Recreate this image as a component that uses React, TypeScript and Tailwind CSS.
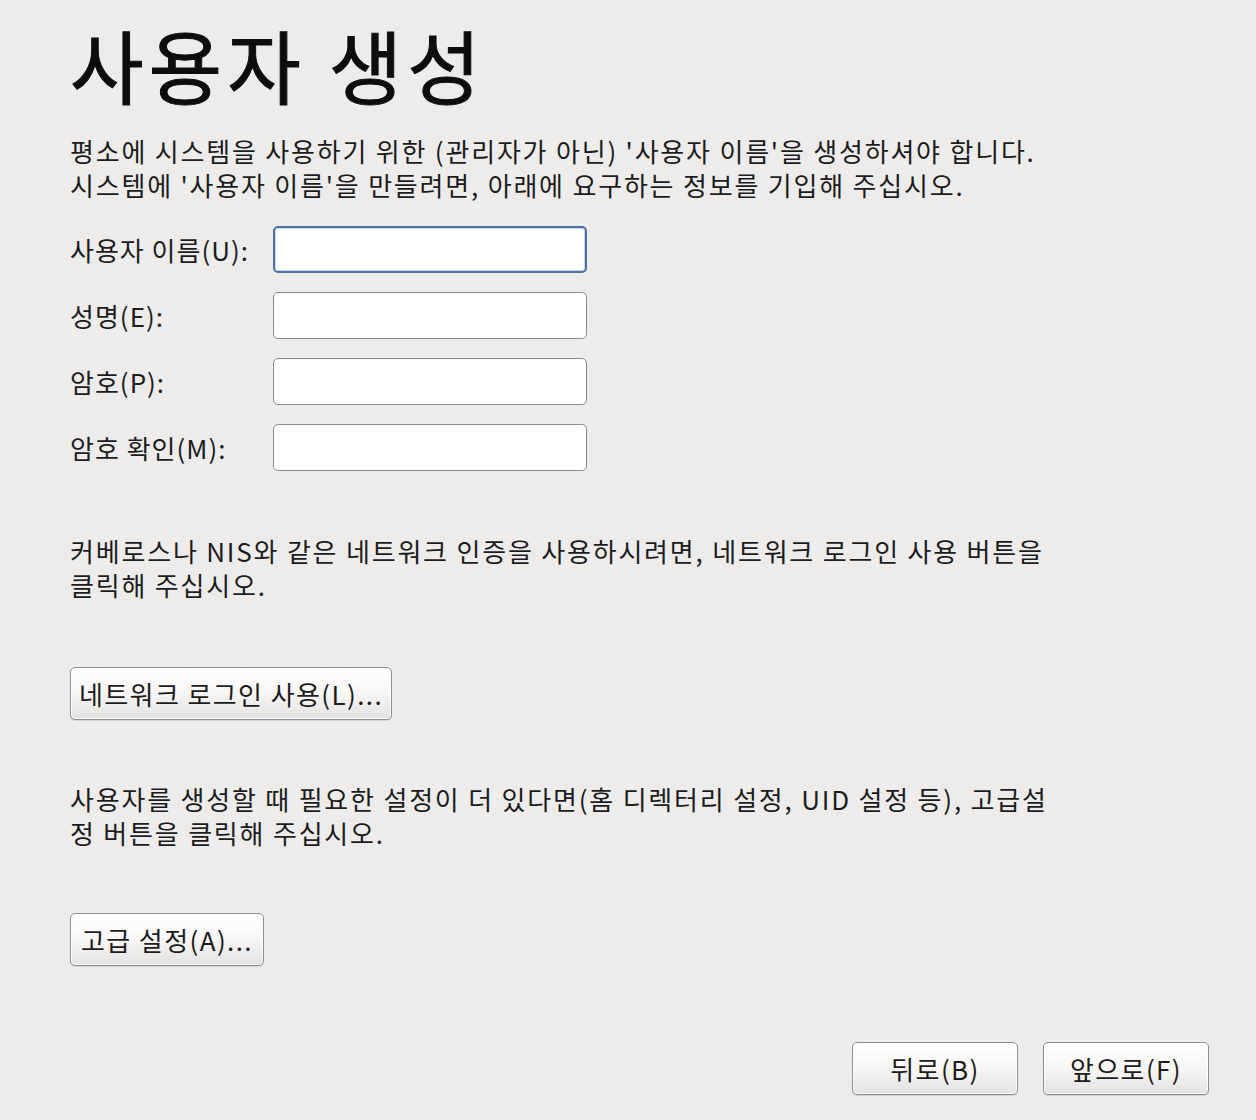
import React from "react";

const font = { fontFamily: '"Noto Sans CJK KR", "DejaVu Sans", sans-serif' };

function Btn({ children, w }: { children: React.ReactNode; w: string }) {
  return (
    <button
      className={`${w} h-[53px] rounded-[5px] border border-[#8e8e8e] bg-gradient-to-b from-[#ffffff] via-[#f7f6f5] to-[#e3e2e0] text-[26px] tracking-[1.4px] text-[#1c1c1c] shadow-[inset_0_0_0_1px_rgba(255,255,255,0.9),0_1px_1px_rgba(0,0,0,0.12)] flex items-center justify-center`}
    >
      {children}
    </button>
  );
}

function Field({ label, focused }: { label: string; focused?: boolean }) {
  return (
    <div className="flex items-center h-[47px]">
      <div className="w-[203px] text-[26px] tracking-[1px] text-[#1c1c1c]">{label}</div>
      <div
        className={`w-[314px] h-[47px] rounded-[5px] bg-white ${
          focused
            ? "border-[2px] border-[#4d72a3] shadow-[inset_0_0_0_1px_#c3d7ee]"
            : "border border-[#8a8a8a]"
        }`}
      />
    </div>
  );
}

export default function App() {
  return (
    <div
      className="w-[1256px] h-[1120px] bg-[#edeceb] text-[#1c1c1c] flex flex-col pl-[70px] pr-[47px]"
      style={font}
    >
      <h1
        className="mt-[17px] text-[80px] leading-[92px] font-normal tracking-[5px] text-[#0d0d0d]"
        style={{ WebkitTextStroke: "1px #0d0d0d" }}
      >
        사용자 생성
      </h1>
      <p className="mt-[25px] text-[26px] leading-[34px] tracking-[1.8px] w-[1100px]">
        평소에 시스템을 사용하기 위한 (관리자가 아닌) '사용자 이름'을 생성하셔야 합니다.
        <br />
        시스템에 '사용자 이름'을 만들려면, 아래에 요구하는 정보를 기입해 주십시오.
      </p>
      <div className="mt-[24px] flex flex-col gap-[19px]">
        <Field label="사용자 이름(U):" focused />
        <Field label="성명(E):" />
        <Field label="암호(P):" />
        <Field label="암호 확인(M):" />
      </div>
      <p className="mt-[63px] text-[26px] leading-[34px] tracking-[1.8px]">
        커베로스나 NIS와 같은 네트워크 인증을 사용하시려면, 네트워크 로그인 사용 버튼을
        <br />
        클릭해 주십시오.
      </p>
      <div className="mt-[65px]">
        <Btn w="w-[322px]">네트워크 로그인 사용(L)...</Btn>
      </div>
      <p className="mt-[62px] text-[26px] leading-[34px] tracking-[1.8px]">
        사용자를 생성할 때 필요한 설정이 더 있다면(홈 디렉터리 설정, UID 설정 등), 고급설
        <br />
        정 버튼을 클릭해 주십시오.
      </p>
      <div className="mt-[63px]">
        <Btn w="w-[194px]">고급 설정(A)...</Btn>
      </div>
      <div className="mt-[76px] flex justify-end gap-[25px]">
        <Btn w="w-[166px]">뒤로(B)</Btn>
        <Btn w="w-[166px]">앞으로(F)</Btn>
      </div>
    </div>
  );
}
